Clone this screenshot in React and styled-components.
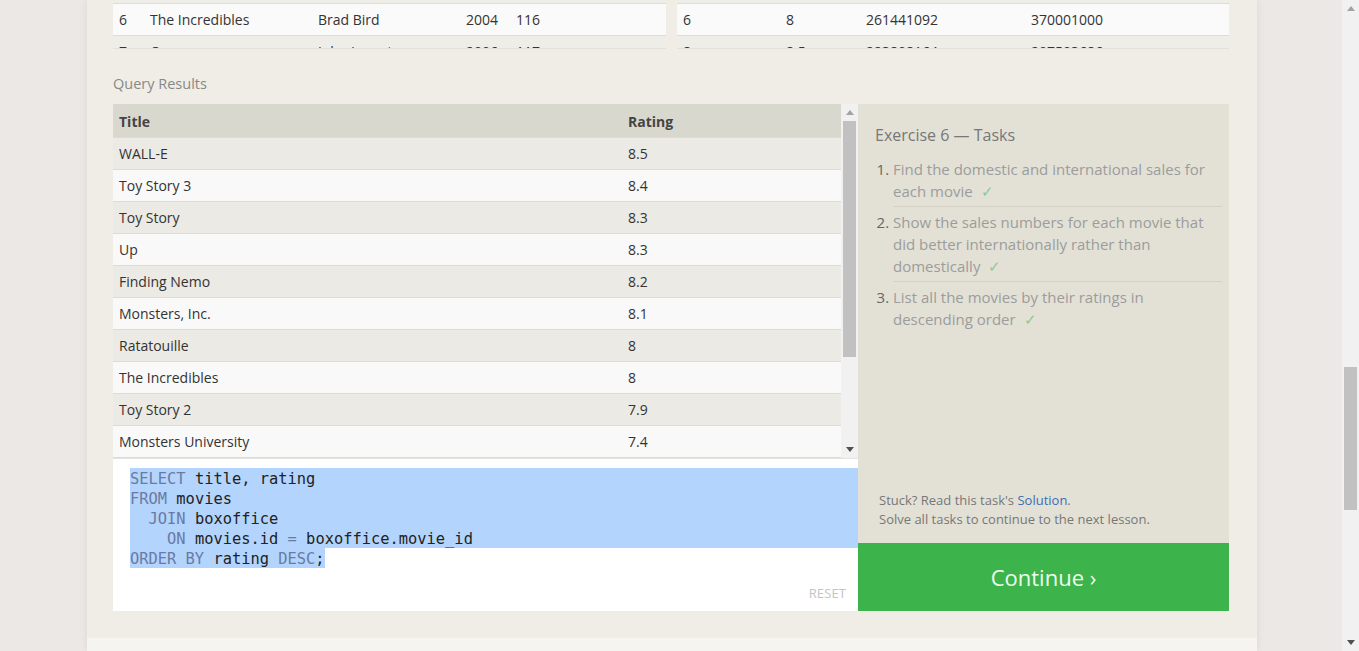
import React from "react"
import styled, { createGlobalStyle } from "styled-components"

const GlobalStyle = createGlobalStyle`
  html, body {
    margin: 0;
    padding: 0;
    overflow: hidden;
    background: #ece8e5;
  }
  body {
    font-family: "Open Sans", "Noto Sans", Arial, sans-serif;
    color: #333;
  }
  * {
    box-sizing: border-box;
  }
`

const Viewport = styled.div`
  display: flex;
  width: 1359px;
  height: 651px;
  overflow: hidden;
`

const Stage = styled.div`
  flex: 1;
  display: flex;
  justify-content: center;
  padding-left: 2px;
`

const Panel = styled.div`
  width: 1170px;
  display: flex;
  flex-direction: column;
  background: #efede6;
  box-shadow: 0 0 8px rgba(0, 0, 0, 0.07);
`

const Content = styled.div`
  flex: 1;
  padding: 0 28px 0 26px;
  display: flex;
  flex-direction: column;
`

const FooterStrip = styled.div`
  height: 13px;
  background: #f5f4f0;
`

const TopTables = styled.div`
  display: grid;
  grid-template-columns: 553px 552px;
  column-gap: 11px;
`

const MiniTable = styled.div`
  height: 49px;
  overflow: hidden;
  padding-top: 3px;
  background: #efede7;
  border-bottom: 1px solid #e2e0d8;
`

const MiniRow = styled.div`
  display: grid;
  grid-template-columns: ${({ cols }) => cols};
  align-items: center;
  height: 32px;
  padding-left: 6px;
  border-top: 1px solid #dedcd4;
  background: ${({ light }) => (light ? "#fafafa" : "#efede7")};
  font-size: 14px;
  color: #333;
`

const QueryLabel = styled.div`
  margin: 25px 0 10px;
  font-size: 14.5px;
  line-height: 20px;
  color: #888;
`

const Workspace = styled.div`
  display: grid;
  grid-template-columns: 745px 371px;
  height: 507px;
`

const LeftColumn = styled.div`
  display: flex;
  flex-direction: column;
`

const ResultsBox = styled.div`
  display: flex;
  height: 355px;
  border-bottom: 1px solid #e4e3de;
  background: #fafafa;
`

const ResultsTable = styled.div`
  flex: 1;
  overflow: hidden;
`

const ResultRow = styled.div`
  display: grid;
  grid-template-columns: 509px 1fr;
  align-items: center;
  height: ${({ head }) => (head ? "33px" : "32px")};
  padding-left: 6px;
  padding-top: ${({ head }) => (head ? "2px" : "0")};
  border-top: ${({ head }) => (head ? "none" : "1px solid #dcdbd5")};
  background: ${({ head, light }) =>
    head ? "#d9d8cf" : light ? "#f9f9f9" : "#ebeae4"};
  font-size: 14px;
  font-weight: ${({ head }) => (head ? 700 : 400)};
  color: ${({ head }) => (head ? "#444" : "#333")};
`

const ScrollTrack = styled.div`
  width: 17px;
  display: flex;
  flex-direction: column;
  background: #f1f1f1;
`

const ArrowBox = styled.div`
  height: 17px;
  display: flex;
  align-items: center;
  justify-content: center;
`

const TrackBody = styled.div`
  flex: 1;
  display: flex;
  flex-direction: column;
`

const Thumb = styled.div`
  margin: 0 2px;
  background: #c1c1c1;
`

const Editor = styled.div`
  flex: 1;
  display: flex;
  flex-direction: column;
  padding-top: 9px;
  background: #fff;
`

const Code = styled.div`
  margin-left: 17px;
  font-family: "DejaVu Sans Mono", "Liberation Mono", monospace;
  font-size: 15.4px;
  color: #222;
`

const CodeLine = styled.div`
  display: ${({ last }) => (last ? "inline-block" : "block")};
  height: 20px;
  padding-top: 1px;
  line-height: 20px;
  white-space: pre;
  background: #b3d4fd;
`

const Kw = styled.span`
  color: #6a7aa3;
`

const Reset = styled.div`
  margin: auto 12px 10px auto;
  font-size: 13px;
  line-height: 16px;
  color: #c4c4c4;
  letter-spacing: 0.1px;
`

const RightColumn = styled.div`
  display: flex;
  flex-direction: column;
`

const TasksPanel = styled.div`
  flex: 1;
  display: flex;
  flex-direction: column;
  padding: 20px 7px 14px 17px;
  background: #e3e1d6;
`

const TasksTitle = styled.div`
  font-size: 16px;
  line-height: 22px;
  color: #777;
`

const TaskList = styled.ol`
  margin: 12px 0 0;
  padding-left: 18px;
`

const TaskItem = styled.li`
  padding: ${({ first }) => (first ? "0 0 4px" : "4px 0")};
  border-bottom: ${({ last }) => (last ? "none" : "1px solid #d4d2c7")};
  font-size: 15px;
  line-height: 22px;
  color: #9c9c9c;

  &::marker {
    color: #666;
  }
`

const Check = styled.span`
  margin-left: 8px;
  color: #8cc892;
`

const Hint = styled.div`
  margin-top: auto;
  padding-left: 4px;
  font-size: 13px;
  line-height: 19px;
  color: #777;
`

const HintLink = styled.span`
  color: #3f6db3;
`

const ContinueButton = styled.div`
  height: 68px;
  display: flex;
  align-items: center;
  justify-content: center;
  background: #3cb44b;
  font-size: 22px;
  color: #eefcee;
`

const BrowserScroll = styled(ScrollTrack)`
  height: 651px;
`

function Arrow({ up, color = "#505050" }) {
  return (
    <svg width="8" height="5" viewBox="0 0 8 5">
      <path d={up ? "M0 5 L4 0 L8 5 Z" : "M0 0 L8 0 L4 5 Z"} fill={color} />
    </svg>
  )
}

function Scrollbar({ offset, size, upColor }) {
  return (
    <ScrollTrack>
      <ArrowBox>
        <Arrow up color={upColor} />
      </ArrowBox>
      <TrackBody>
        <Thumb style={{ marginTop: offset, height: size }} />
      </TrackBody>
      <ArrowBox>
        <Arrow />
      </ArrowBox>
    </ScrollTrack>
  )
}

const movieCols = "31px 168px 148px 50px 1fr"
const boxCols = "103px 80px 165px 1fr"

const results = [
  ["WALL-E", "8.5"],
  ["Toy Story 3", "8.4"],
  ["Toy Story", "8.3"],
  ["Up", "8.3"],
  ["Finding Nemo", "8.2"],
  ["Monsters, Inc.", "8.1"],
  ["Ratatouille", "8"],
  ["The Incredibles", "8"],
  ["Toy Story 2", "7.9"],
  ["Monsters University", "7.4"],
  ["A Bug's Life", "7.2"],
]

export default function App() {
  return (
    <>
      <GlobalStyle />
      <Viewport>
        <Stage>
          <Panel>
            <Content>
              <TopTables>
                <MiniTable>
                  <MiniRow cols={movieCols} light>
                    <span>6</span>
                    <span>The Incredibles</span>
                    <span>Brad Bird</span>
                    <span>2004</span>
                    <span>116</span>
                  </MiniRow>
                  <MiniRow cols={movieCols}>
                    <span>7</span>
                    <span>Cars</span>
                    <span>John Lasseter</span>
                    <span>2006</span>
                    <span>117</span>
                  </MiniRow>
                </MiniTable>
                <MiniTable>
                  <MiniRow cols={boxCols} light>
                    <span>6</span>
                    <span>8</span>
                    <span>261441092</span>
                    <span>370001000</span>
                  </MiniRow>
                  <MiniRow cols={boxCols}>
                    <span>8</span>
                    <span>8.5</span>
                    <span>223808164</span>
                    <span>297503686</span>
                  </MiniRow>
                </MiniTable>
              </TopTables>

              <QueryLabel>Query Results</QueryLabel>

              <Workspace>
                <LeftColumn>
                  <ResultsBox>
                    <ResultsTable>
                      <ResultRow head>
                        <span>Title</span>
                        <span>Rating</span>
                      </ResultRow>
                      {results.map(([title, rating], i) => (
                        <ResultRow key={title} light={i % 2 === 1}>
                          <span>{title}</span>
                          <span>{rating}</span>
                        </ResultRow>
                      ))}
                    </ResultsTable>
                    <Scrollbar offset={0} size={236} upColor="#a3a3a3" />
                  </ResultsBox>
                  <Editor>
                    <Code>
                      <CodeLine>
                        <Kw>SELECT</Kw> title, rating
                      </CodeLine>
                      <CodeLine>
                        <Kw>FROM</Kw> movies
                      </CodeLine>
                      <CodeLine>
                        {"  "}
                        <Kw>JOIN</Kw> boxoffice
                      </CodeLine>
                      <CodeLine>
                        {"    "}
                        <Kw>ON</Kw> movies.id <Kw>=</Kw> boxoffice.movie_id
                      </CodeLine>
                      <CodeLine last>
                        <Kw>ORDER BY</Kw> rating <Kw>DESC</Kw>;
                      </CodeLine>
                    </Code>
                    <Reset>RESET</Reset>
                  </Editor>
                </LeftColumn>

                <RightColumn>
                  <TasksPanel>
                    <TasksTitle>Exercise 6 — Tasks</TasksTitle>
                    <TaskList>
                      <TaskItem first>
                        Find the domestic and international sales for each
                        movie<Check>✓</Check>
                      </TaskItem>
                      <TaskItem>
                        Show the sales numbers for each movie that did better
                        internationally rather than domestically
                        <Check>✓</Check>
                      </TaskItem>
                      <TaskItem last>
                        List all the movies by their ratings in descending
                        order<Check>✓</Check>
                      </TaskItem>
                    </TaskList>
                    <Hint>
                      Stuck? Read this task's <HintLink>Solution</HintLink>.
                      <br />
                      Solve all tasks to continue to the next lesson.
                    </Hint>
                  </TasksPanel>
                  <ContinueButton>Continue ›</ContinueButton>
                </RightColumn>
              </Workspace>
            </Content>
            <FooterStrip />
          </Panel>
        </Stage>
        <BrowserScroll>
          <ArrowBox>
            <Arrow up color="#a3a3a3" />
          </ArrowBox>
          <TrackBody>
            <Thumb style={{ marginTop: 350, height: 143 }} />
          </TrackBody>
          <ArrowBox>
            <Arrow />
          </ArrowBox>
        </BrowserScroll>
      </Viewport>
    </>
  )
}
